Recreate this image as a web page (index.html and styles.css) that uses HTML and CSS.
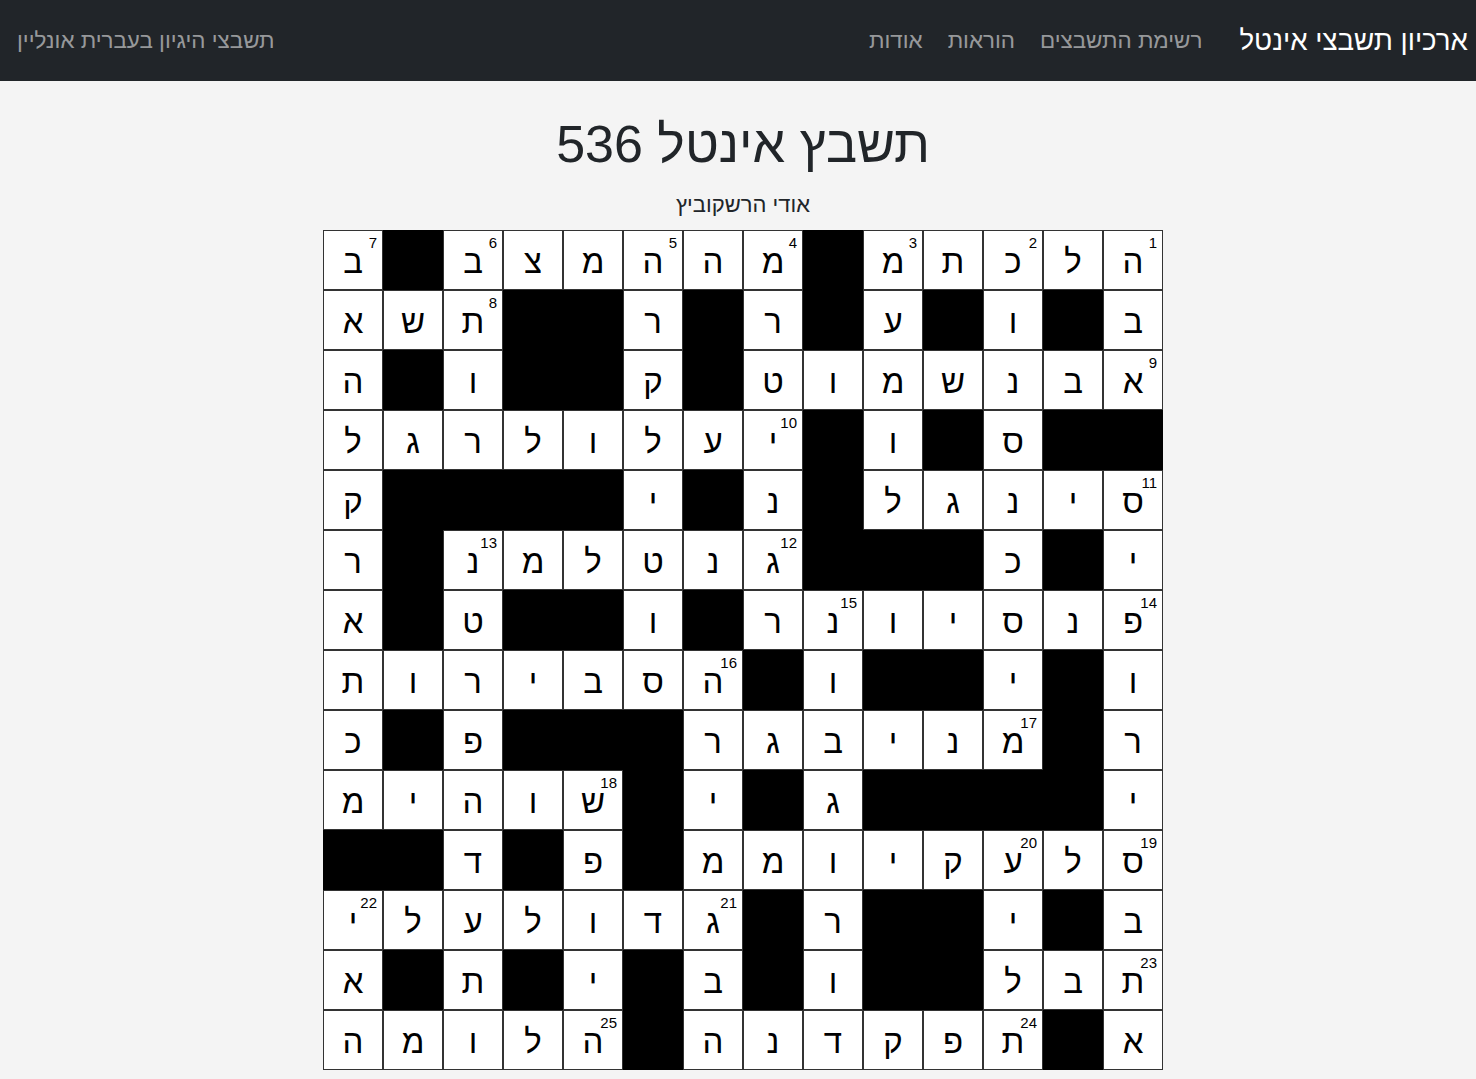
FILE: index.html
```html
<!DOCTYPE html>
<html lang="he" dir="rtl">
<head>
<meta charset="utf-8">
<title>תשבץ אינטל 536</title>
<link rel="stylesheet" href="styles.css">
</head>
<body>
<nav class="navbar">
  <a class="brand" href="#">ארכיון תשבצי אינטל</a>
  <ul class="nav-links">
    <li><a href="#">רשימת התשבצים</a></li>
    <li><a href="#">הוראות</a></li>
    <li><a href="#">אודות</a></li>
  </ul>
  <span class="tagline">תשבצי היגיון בעברית אונליין</span>
</nav>
<main class="content">
  <h1 class="title">תשבץ אינטל 536</h1>
  <p class="author">אודי הרשקוביץ</p>
  <div class="grid" id="grid"></div>
</main>
<script src="script.js"></script>
</body>
</html>
```
FILE: styles.css
```css
* { box-sizing: border-box; }
html, body { margin: 0; padding: 0; }
body {
  background: #f4f4f4;
  font-family: "Liberation Sans", Arial, sans-serif;
  color: #212529;
}
.navbar {
  height: 81px;
  background: #212529;
  display: flex;
  align-items: center;
  padding: 0 8px 0 17px;
}
.brand {
  color: #fff;
  text-decoration: none;
  font-size: 27.7px;
  margin-left: 37px;
}
.nav-links {
  list-style: none;
  margin: 0;
  padding: 0;
  display: flex;
  gap: 25px;
}
.nav-links a {
  color: rgba(255,255,255,0.55);
  text-decoration: none;
  font-size: 22.4px;
}
.tagline {
  margin-right: auto;
  color: rgba(255,255,255,0.55);
  font-size: 22.4px;
}
.content {
  display: flex;
  flex-direction: column;
  align-items: center;
  padding-left: 10px;
}
.title {
  font-weight: 400;
  font-size: 52px;
  margin: 32px 0 0;
  line-height: 1.2;
}
.author {
  font-size: 22px;
  margin: 17px 0 12px;
}
.grid {
  display: grid;
  grid-template-columns: repeat(14, 60px);
  grid-auto-rows: 60px;
  direction: rtl;
}
.cell {
  position: relative;
  border: 1px solid #333;
  background: #fff;
  display: flex;
  align-items: center;
  justify-content: center;
  font-size: 33px;
  color: #000;
  padding-top: 4px;
}
.cell.block { background: #000; border-color: #000; }
.num {
  position: absolute;
  top: 4px;
  right: 5px;
  font-size: 15px;
  line-height: 1;
}
```
FILE: script.js
```js
const rows = [
  "ה1 ל כ2 ת מ3 # מ4 ה ה5 מ צ ב6 # ב7",
  "ב # ו # ע # ר # ר # # ת8 ש א",
  "א9 ב נ ש מ ו ט # ק # # ו # ה",
  "# # ס # ו # י10 ע ל ו ל ר ג ל",
  "ס11 י נ ג ל # נ # י # # # # ק",
  "י # כ # # # ג12 נ ט ל מ נ13 # ר",
  "פ14 נ ס י ו נ15 ר # ו # # ט # א",
  "ו # י # # ו # ה16 ס ב י ר ו ת",
  "ר # מ17 נ י ב ג ר # # # פ # כ",
  "י # # # # ג # י # ש18 ו ה י מ",
  "ס19 ל ע20 ק י ו מ מ # פ # ד # #",
  "ב # י # # ר # ג21 ד ו ל ע ל י22",
  "ת23 ב ל # # ו # ב # י # ת # א",
  "א # ת24 פ ק ד נ ה # ה25 ל ו מ ה"
];
const grid = document.getElementById("grid");
rows.forEach(r => {
  r.split(" ").forEach(tok => {
    const cell = document.createElement("div");
    cell.className = "cell";
    if (tok === "#") {
      cell.classList.add("block");
    } else {
      const letter = tok[0];
      const num = tok.slice(1);
      cell.textContent = letter;
      if (num) {
        const n = document.createElement("span");
        n.className = "num";
        n.textContent = num;
        cell.appendChild(n);
      }
    }
    grid.appendChild(cell);
  });
});
```
